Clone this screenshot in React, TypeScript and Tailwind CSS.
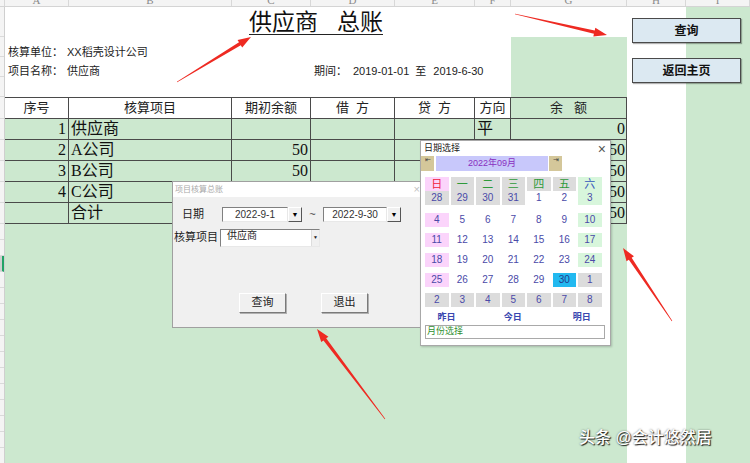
import React from "react";

const SANS = '"Liberation Sans","Noto Sans CJK SC",sans-serif';
const SERIF = '"Liberation Serif","Noto Sans CJK SC",serif';

function Arrow({ x1, y1, x2, y2 }: { x1: number; y1: number; x2: number; y2: number }) {
  const dx = x2 - x1;
  const dy = y2 - y1;
  const L = Math.hypot(dx, dy);
  const ux = dx / L;
  const uy = dy / L;
  const px = -uy;
  const py = ux;
  const headLen = 13;
  const headW = 4.5;
  const shaftW = 1.7;
  const tailW = 0.3;
  const bx = x2 - ux * headLen;
  const by = y2 - uy * headLen;
  const pts = [
    [x1 + px * tailW, y1 + py * tailW],
    [bx + px * shaftW, by + py * shaftW],
    [bx + px * headW, by + py * headW],
    [x2, y2],
    [bx - px * headW, by - py * headW],
    [bx - px * shaftW, by - py * shaftW],
    [x1 - px * tailW, y1 - py * tailW],
  ]
    .map((p) => p.join(","))
    .join(" ");
  return <polygon points={pts} fill="#ee2a22" />;
}

const colHeads: [string, string][] = [
  ["", "w-[5px]"],
  ["A", "w-[64px]"],
  ["B", "w-[163px]"],
  ["C", "w-[79px]"],
  ["D", "w-[84px]"],
  ["E", "w-[80px]"],
  ["F", "w-[36px]"],
  ["G", "w-[116px]"],
  ["H", "w-[59px]"],
  ["I", "w-[64px]"],
];

const stripRows: string[] = [
  "h-[30px]", "h-[20px]", "h-[20px]", "h-[20px]",
  "h-[22px]", "h-[21px]", "h-[21px]", "h-[21px]", "h-[21px]", "h-[21px]",
  "h-[16px]", "h-[16px]", "h-[16px]", "h-[16px]", "h-[16px]", "h-[16px]", "h-[16px]", "h-[16px]",
  "h-[16px]", "h-[16px]", "h-[16px]", "h-[16px]", "h-[16px]", "h-[16px]", "h-[16px]",
];

type Row = { n: string; name: string; c: string; g: string; f: string };
const rows: Row[] = [
  { n: "1", name: "供应商", c: "", g: "0", f: "平" },
  { n: "2", name: "A公司", c: "50", g: "50", f: "" },
  { n: "3", name: "B公司", c: "50", g: "50", f: "" },
  { n: "4", name: "C公司", c: "50", g: "50", f: "" },
  { n: "", name: "合计", c: "", g: "50", f: "" },
];

const bgMap: Record<string, string> = {
  g: "bg-[#dcdcdc]",
  w: "bg-white",
  s: "bg-[#d8f6dc]",
  p: "bg-[#fbd4fb]",
  c: "bg-[#22b9f0]",
};

const calRows: [string, string][][] = [
  [["28", "g"], ["29", "g"], ["30", "g"], ["31", "g"], ["1", "w"], ["2", "w"], ["3", "s"]],
  [["4", "p"], ["5", "w"], ["6", "w"], ["7", "w"], ["8", "w"], ["9", "w"], ["10", "s"]],
  [["11", "p"], ["12", "w"], ["13", "w"], ["14", "w"], ["15", "w"], ["16", "w"], ["17", "s"]],
  [["18", "p"], ["19", "w"], ["20", "w"], ["21", "w"], ["22", "w"], ["23", "w"], ["24", "s"]],
  [["25", "p"], ["26", "w"], ["27", "w"], ["28", "w"], ["29", "w"], ["30", "c"], ["1", "g"]],
  [["2", "g"], ["3", "g"], ["4", "g"], ["5", "g"], ["6", "g"], ["7", "g"], ["8", "g"]],
];

const weekdays: [string, string, string][] = [
  ["日", "bg-[#fbd4fb]", "text-[#f0203c]"],
  ["一", "bg-[#dcdcdc]", "text-[#2e9a3a]"],
  ["二", "bg-[#dcdcdc]", "text-[#2e9a3a]"],
  ["三", "bg-[#dcdcdc]", "text-[#2e9a3a]"],
  ["四", "bg-[#dcdcdc]", "text-[#2e9a3a]"],
  ["五", "bg-[#dcdcdc]", "text-[#2e9a3a]"],
  ["六", "bg-[#d8f6dc]", "text-[#3355bb]"],
];

function DropBtn() {
  return (
    <div className="w-[14px] h-[15px] bg-[#f0f0f0] border border-t-white border-l-white border-b-[#555] border-r-[#555] flex items-center justify-center">
      <span className="text-[7px] leading-none text-black">▼</span>
    </div>
  );
}

function SunkenInput({ w, text }: { w: string; text: string }) {
  return (
    <div
      className={`${w} h-[15px] bg-white border border-t-[#808080] border-l-[#808080] border-b-[#e8e8e8] border-r-[#e8e8e8] flex items-center justify-center text-[10px] text-[#333]`}
    >
      {text}
    </div>
  );
}

function RaisedBtn({ text }: { text: string }) {
  return (
    <div className="w-[47px] h-[20px] bg-[#f0f0f0] border border-t-white border-l-white border-b-[#7a7a7a] border-r-[#7a7a7a] shadow-[1px_1px_0_#b0b0b0] flex items-center justify-center text-[11px] text-[#222]">
      {text}
    </div>
  );
}

export default function App() {
  return (
    <div className="relative w-[750px] h-[463px] overflow-hidden bg-white" style={{ fontFamily: SANS }}>
      {/* column header strip */}
      <div className="flex h-[7px] overflow-hidden bg-[#f4f4f4] border-b border-[#d4d4d4]">
        {colHeads.map(([l, w], i) => (
          <div key={i} className={`${w} shrink-0 h-full border-r border-[#d8d8d8] flex justify-center overflow-hidden`}>
            <span className="block text-[11px] leading-[11px] -mt-[5px] text-[#8a8a8a]" style={{ fontFamily: SERIF }}>
              {l}
            </span>
          </div>
        ))}
      </div>

      {/* sheet body */}
      <div className="flex h-[456px]">
        {/* row header strip */}
        <div className="w-[5px] shrink-0 flex flex-col bg-[#f4f4f4] border-r border-[#cfcfcf]">
          {stripRows.map((h, i) => (
            <div
              key={i}
              className={`${h} shrink-0 border-b border-[#dadada] ${i === 12 ? "bg-[#d0d0d0] border-r-2 border-r-[#21a366]" : ""}`}
            />
          ))}
        </div>

        {/* main columns A-G */}
        <div className="w-[622px] shrink-0 flex flex-col">
          <div className="h-[30px] bg-white flex justify-center items-start pt-[4px]">
            <div className="flex h-[24px] leading-[23px] text-[23px] text-[#111] border-b border-[#222]">
              <span>供应商</span>
              <span className="w-[19px]" />
              <span>总账</span>
            </div>
          </div>
          <div className="h-[60px] flex">
            <div className="w-[506px] bg-white pt-[6px] text-[11px] text-[#222]">
              <div className="h-[19px] flex items-center pl-[3px]">
                <span className="w-[59px]">核算单位：</span>
                <span>XX稻壳设计公司</span>
              </div>
              <div className="h-[19px] flex items-center pl-[3px]">
                <span className="w-[59px]">项目名称：</span>
                <span className="w-[247px]">供应商</span>
                <span className="w-[39px]">期间：</span>
                <span>2019-01-01</span>
                <span className="ml-[6px]">至</span>
                <span className="ml-[7px]">2019-6-30</span>
              </div>
            </div>
            <div className="w-[116px] bg-[#cce8cf]" />
          </div>

          {/* table header */}
          <div className="h-[22px] flex border-t border-b border-[#4a4a4a] text-[13px] text-[#222]">
            <div className="w-[64px] border-r border-[#4a4a4a] bg-white flex items-center justify-center">序号</div>
            <div className="w-[163px] border-r border-[#4a4a4a] bg-white flex items-center justify-center">核算项目</div>
            <div className="w-[79px] border-r border-[#4a4a4a] bg-white flex items-center justify-center">期初余额</div>
            <div className="w-[84px] border-r border-[#4a4a4a] bg-white flex items-center justify-center whitespace-pre">借  方</div>
            <div className="w-[80px] border-r border-[#4a4a4a] bg-white flex items-center justify-center whitespace-pre">贷  方</div>
            <div className="w-[36px] border-r border-[#4a4a4a] bg-white flex items-center justify-center">方向</div>
            <div className="w-[116px] border-r border-[#4a4a4a] bg-[#cce8cf] flex items-center justify-center whitespace-pre">余   额</div>
          </div>
          {rows.map((r, i) => (
            <div key={i} className="h-[21px] flex border-b border-[#4a4a4a] bg-[#cce8cf] text-[16px] text-[#111]" style={{ fontFamily: SERIF }}>
              <div className="w-[64px] border-r border-[#4a4a4a] flex items-center justify-end pr-[2px]">{r.n}</div>
              <div className="w-[163px] border-r border-[#4a4a4a] flex items-center pl-[2px]">{r.name}</div>
              <div className="w-[79px] border-r border-[#4a4a4a] flex items-center justify-end pr-[2px]">{r.c}</div>
              <div className="w-[84px] border-r border-[#4a4a4a]" />
              <div className="w-[80px] border-r border-[#4a4a4a]" />
              <div className="w-[36px] border-r border-[#4a4a4a] flex items-center pl-[2px]">{r.f}</div>
              <div className="w-[116px] border-r border-[#4a4a4a] flex items-center justify-end pr-[1px]">{r.g}</div>
            </div>
          ))}
          <div className="flex-1 bg-[#cce8cf]" />
        </div>

        {/* column H */}
        <div className="w-[59px] shrink-0 bg-white" />
        {/* column I */}
        <div className="w-[64px] shrink-0 bg-[#cce8cf]" />
      </div>

      {/* floating sheet buttons */}
      <div className="absolute left-[632px] top-[18px] w-[109px] h-[25px] bg-[#dce9f2] border border-[#4a4a4a] shadow-[1px_1px_1px_rgba(0,0,0,0.3)] flex items-center justify-center text-[12px] font-bold text-[#111]">
        查询
      </div>
      <div className="absolute left-[632px] top-[58px] w-[109px] h-[25px] bg-[#dce9f2] border border-[#4a4a4a] shadow-[1px_1px_1px_rgba(0,0,0,0.3)] flex items-center justify-center text-[12px] font-bold text-[#111]">
        返回主页
      </div>

      {/* dialog: 项目核算总账 */}
      <div className="absolute left-[172px] top-[181px] w-[252px] h-[147px] bg-[#f0f0f0] border border-[#a0a0a0] flex flex-col">
        <div className="h-[15px] bg-white flex items-center justify-between pl-[2px] pr-[3px]">
          <span className="text-[8px] text-[#aaaaaa]">项目核算总账</span>
          <span className="text-[11px] text-[#c0c0c0] leading-none">×</span>
        </div>
        <div className="flex items-center mt-[9px] pl-[9px]">
          <span className="w-[40px] text-[11px] text-[#222]">日期</span>
          <SunkenInput w="w-[66px]" text="2022-9-1" />
          <DropBtn />
          <span className="w-[21px] text-center text-[11px] text-[#444]">~</span>
          <SunkenInput w="w-[64px]" text="2022-9-30" />
          <DropBtn />
        </div>
        <div className="flex items-center mt-[6px] pl-[1px]">
          <span className="w-[46px] text-[11px] text-[#222]">核算项目</span>
          <div className="w-[100px] h-[18px] bg-white border border-t-[#808080] border-l-[#808080] border-b-[#e8e8e8] border-r-[#e8e8e8] flex items-start justify-between pl-[6px] text-[10px] text-[#222]">
            <span className="leading-[12px]">供应商</span>
            <div className="w-[8px] h-full bg-[#f0f0f0] flex items-center justify-center border-l border-[#ddd]">
              <span className="text-[5px] leading-none">▼</span>
            </div>
          </div>
        </div>
        <div className="flex mt-[46px] pl-[66px] gap-[35px]">
          <RaisedBtn text="查询" />
          <RaisedBtn text="退出" />
        </div>
      </div>

      {/* calendar popup */}
      <div className="absolute left-[420px] top-[140px] w-[191px] h-[206px] bg-white border border-[#a8a8a8] shadow-[1px_1px_2px_rgba(0,0,0,0.2)] flex flex-col">
        <div className="h-[15px] flex items-center justify-between pl-[3px] pr-[4px]">
          <span className="text-[9px] text-[#222]">日期选择</span>
          <span className="text-[14px] font-light text-[#555] leading-none">×</span>
        </div>
        <div className="h-[15px] flex pl-[0px]">
          <div className="w-[13px] h-full bg-[#d4c79a] flex items-start justify-center">
            <span className="text-[7px] leading-[8px] text-[#444]">⇤</span>
          </div>
          <div className="w-[112px] h-full ml-[2px] bg-[#c8c8fb] flex items-center justify-center text-[9px] text-[#8a2fc0]">
            2022年09月
          </div>
          <div className="w-[13px] h-full ml-[1px] bg-[#d4c79a] flex items-start justify-center">
            <span className="text-[7px] leading-[8px] text-[#444]">⇥</span>
          </div>
        </div>
        <div className="mt-[6px] pl-[4px] flex flex-col">
          <div className="grid grid-cols-[repeat(7,23.5px)] gap-x-[2px] h-[14px]">
            {weekdays.map(([t, bg, c], i) => (
              <div key={i} className={`${bg} ${c} flex items-center justify-center text-[11px] leading-none`}>
                {t}
              </div>
            ))}
          </div>
          {calRows.map((r, ri) => (
            <div
              key={ri}
              className={`grid grid-cols-[repeat(7,23.5px)] gap-x-[2px] h-[14px] ${ri === 0 ? "" : ri === 1 ? "mt-[8px]" : "mt-[6px]"}`}
            >
              {r.map(([d, k], ci) => (
                <div
                  key={ci}
                  className={`${bgMap[k]} flex items-center justify-center text-[10px] leading-none ${k === "c" ? "text-[#243a8c]" : "text-[#4a4aa8]"}`}
                >
                  {d}
                </div>
              ))}
            </div>
          ))}
        </div>
        <div className="flex h-[14px] mt-[4px] items-center text-[9px] font-bold text-[#3a48b0]">
          <span className="w-[54px] text-center">昨日</span>
          <span className="w-[86px] text-center">今日</span>
          <span className="w-[60px] text-center">明日</span>
        </div>
        <div className="ml-[4px] w-[180px] h-[14px] border border-[#a9a9a9] flex items-center pl-[1px] text-[9px] text-[#2f8f2f]">
          月份选择
        </div>
      </div>

      {/* red arrows */}
      <svg className="absolute left-0 top-0 pointer-events-none" width="750" height="463" viewBox="0 0 750 463">
        <Arrow x1={177} y1={82} x2={251} y2={37} />
        <Arrow x1={515} y1={14} x2={607} y2={35} />
        <Arrow x1={672} y1={321} x2={623} y2={248} />
        <Arrow x1={385} y1={419} x2={317} y2={329} />
      </svg>

      {/* watermark */}
      <div className="absolute left-[579px] top-[428px] text-[16px] leading-[20px] text-white font-medium [text-shadow:1px_1px_1px_rgba(0,0,0,0.85),0_0_2px_rgba(0,0,0,0.5)]">
        头条 @会计悠然居
      </div>
    </div>
  );
}
